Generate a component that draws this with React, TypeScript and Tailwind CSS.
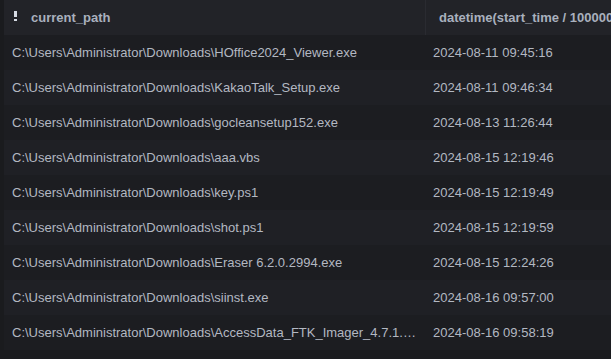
const rows: [string, string][] = [
  ["C:\\Users\\Administrator\\Downloads\\HOffice2024_Viewer.exe", "2024-08-11 09:45:16"],
  ["C:\\Users\\Administrator\\Downloads\\KakaoTalk_Setup.exe", "2024-08-11 09:46:34"],
  ["C:\\Users\\Administrator\\Downloads\\gocleansetup152.exe", "2024-08-13 11:26:44"],
  ["C:\\Users\\Administrator\\Downloads\\aaa.vbs", "2024-08-15 12:19:46"],
  ["C:\\Users\\Administrator\\Downloads\\key.ps1", "2024-08-15 12:19:49"],
  ["C:\\Users\\Administrator\\Downloads\\shot.ps1", "2024-08-15 12:19:59"],
  ["C:\\Users\\Administrator\\Downloads\\Eraser 6.2.0.2994.exe", "2024-08-15 12:24:26"],
  ["C:\\Users\\Administrator\\Downloads\\siinst.exe", "2024-08-16 09:57:00"],
  ["C:\\Users\\Administrator\\Downloads\\AccessData_FTK_Imager_4.7.1.2.exe", "2024-08-16 09:58:19"],
];

export default function App() {
  return (
    <div
      className="w-[611px] h-[359px] overflow-hidden bg-[#1a1b1e] pl-[4px] text-[13px]"
      style={{ fontFamily: '"Liberation Sans", Arial, sans-serif' }}
    >
      <div className="w-[640px]">
        {/* Header */}
        <div className="flex h-[35px] bg-[#222328] font-bold text-[#a9b0bd]">
          <div className="flex w-[422px] shrink-0 items-center border-r border-[#2a2b31] pl-[10px]">
            <svg width="3" height="10" viewBox="0 0 3 10" className="mr-[14px] mb-[4px]">
              <rect x="0" y="0" width="3" height="6" fill="#d6dbe4" />
              <rect x="0" y="8" width="3" height="2" fill="#d6dbe4" />
            </svg>
            current_path
          </div>
          <div className="flex flex-1 items-center pl-[13px] whitespace-nowrap overflow-hidden">
            datetime(start_time / 1000000, 'unixepoch')
          </div>
        </div>

        {/* Rows */}
        {rows.map(([path, time], i) => (
          <div
            key={i}
            className={`flex h-[35px] items-center text-[#b3b8c2] ${
              i % 2 === 0 ? "bg-[#1c1d21]" : "bg-[#1f2025]"
            }`}
          >
            <div className="w-[422px] shrink-0 truncate pl-[8px] pr-[6px]">{path}</div>
            <div className="pl-[7px] whitespace-nowrap">{time}</div>
          </div>
        ))}
      </div>
    </div>
  );
}
